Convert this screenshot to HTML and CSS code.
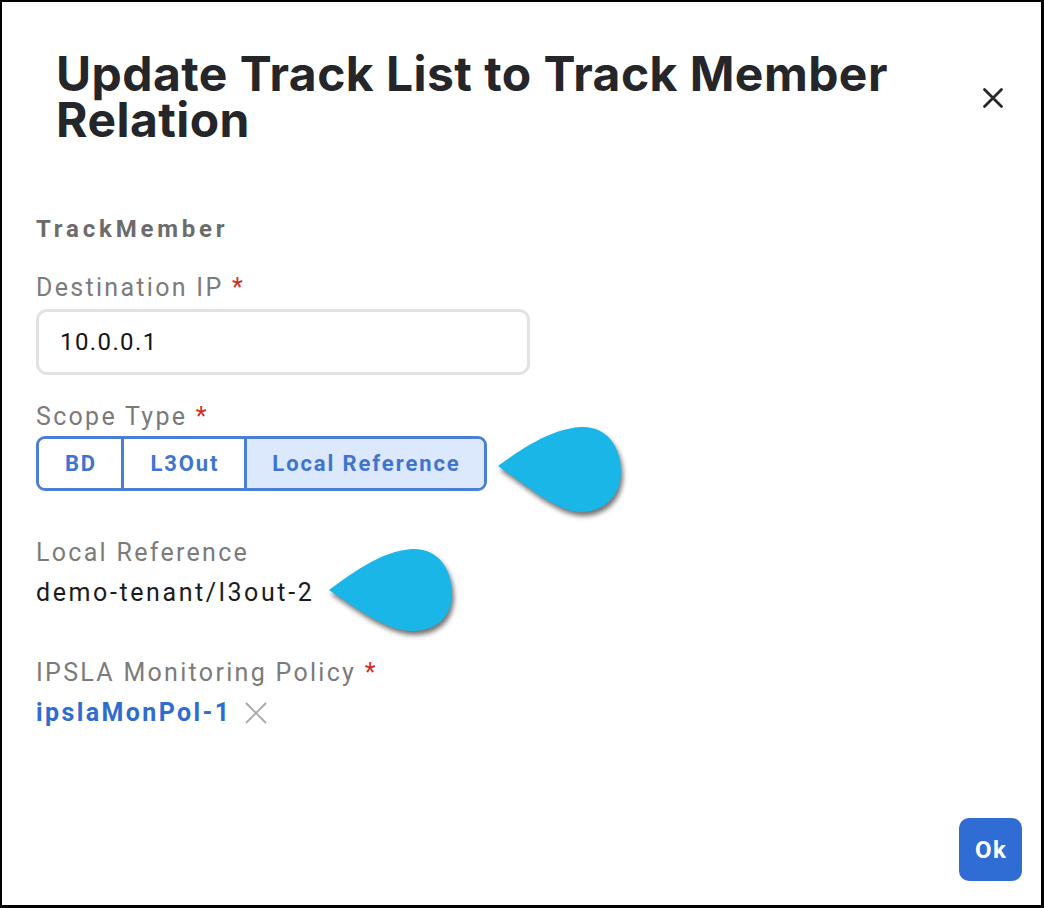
FILE: index.html
```html
<!DOCTYPE html>
<html lang="en">
<head>
<meta charset="utf-8">
<title>Update Track List to Track Member Relation</title>
<link rel="stylesheet" href="styles.css">
</head>
<body>
<div class="frame">
  <div class="dialog">
    <header class="dialog-header">
      <h1 class="dialog-title">Update Track List to Track Member Relation</h1>
      <button class="close-btn" aria-label="Close">
        <svg width="22" height="22" viewBox="0 0 22 22"><path d="M2.5 2.5 L19.5 19.5 M19.5 2.5 L2.5 19.5" stroke="#26272b" stroke-width="2.8" stroke-linecap="round" fill="none"/></svg>
      </button>
    </header>

    <section class="form">
      <h2 class="section-title">TrackMember</h2>

      <label class="field-label label-dest">Destination IP <span class="req">*</span></label>
      <div class="text-input">10.0.0.1</div>

      <label class="field-label label-scope">Scope Type <span class="req">*</span></label>
      <div class="segment-row">
        <div class="segmented">
          <span class="seg seg-bd">BD</span>
          <span class="seg seg-l3">L3Out</span>
          <span class="seg seg-local active">Local Reference</span>
        </div>
        <svg class="drop drop-scope" width="128" height="90" viewBox="0 0 128 90"><path d="M1 41 C22 26 52 4 84 2 C110 1 124 22 124 46 C124 72 106 87 84 87 C60 87 32 62 1 41 Z" fill="#19b6e7"/></svg>
      </div>

      <label class="field-label label-local">Local Reference</label>
      <div class="value-row"><span class="value-text">demo-tenant/l3out-2<svg class="drop drop-local" width="128" height="90" viewBox="0 0 128 90"><path d="M1 43 C22 28 52 4 84 2 C110 1 124 22 124 46 C124 72 106 84 84 84 C60 84 32 64 1 43 Z" fill="#19b6e7"/></svg></span></div>

      <label class="field-label label-ipsla">IPSLA Monitoring Policy <span class="req">*</span></label>
      <div class="chip-row">
        <span class="chip-link">ipslaMonPol-1</span>
        <svg class="chip-remove" width="24" height="24" viewBox="0 0 24 24"><path d="M2 2 L22 22 M22 2 L2 22" stroke="#a9a9a9" stroke-width="1.8" fill="none"/></svg>
      </div>
    </section>

    <footer class="dialog-footer">
      <button class="ok-btn">Ok</button>
    </footer>
  </div>
</div>
</body>
</html>
```

FILE: styles.css
```css
* {
  box-sizing: border-box;
}

html, body {
  margin: 0;
  padding: 0;
  background: #ffffff;
}

.frame {
  width: 1044px;
  height: 908px;
  border-style: solid;
  border-color: #000000;
  border-width: 2px 3px 3px 2px;
  background: #ffffff;
}

.dialog {
  height: 100%;
  display: flex;
  flex-direction: column;
  font-family: Roboto, "Liberation Sans", Arial, sans-serif;
}

/* header */
.dialog-header {
  display: flex;
  align-items: center;
  justify-content: space-between;
  padding: 49px 37px 0 54px;
}

.dialog-title {
  margin: 0;
  font-family: Inter, "Noto Sans", sans-serif;
  font-weight: 700;
  font-size: 48px;
  line-height: 46px;
  letter-spacing: 0.45px;
  color: #25262a;
  width: 860px;
}

.close-btn {
  border: none;
  background: transparent;
  padding: 0;
  width: 22px;
  height: 22px;
  margin-top: 2px;
  cursor: pointer;
}

.close-btn svg {
  display: block;
}

/* form */
.form {
  display: flex;
  flex-direction: column;
  align-items: flex-start;
  padding: 0 0 0 34px;
}

.section-title {
  margin: 71px 0 0 0;
  font-size: 24px;
  line-height: 30px;
  font-weight: 700;
  letter-spacing: 3.8px;
  color: #6c6c6c;
}

.field-label {
  display: block;
  font-size: 25px;
  line-height: 30px;
  font-weight: 400;
  letter-spacing: 2.3px;
  color: #7b7b7b;
}

.req {
  color: #d42a1f;
}

.label-dest {
  margin-top: 29px;
}

.text-input {
  margin-top: 6px;
  width: 494px;
  height: 66px;
  border: 3px solid #e2e2e2;
  border-radius: 11px;
  padding: 0 0 0 21px;
  display: flex;
  align-items: center;
  font-size: 24px;
  letter-spacing: 1.4px;
  color: #141414;
}

.label-scope {
  margin-top: 27px;
}

.segment-row {
  position: relative;
  margin-top: 4px;
}

.segmented {
  display: flex;
  height: 55px;
  border: 3px solid #4b7fd5;
  border-radius: 9px;
  overflow: hidden;
}

.seg {
  display: flex;
  align-items: center;
  justify-content: center;
  font-size: 22px;
  font-weight: 700;
  letter-spacing: 1.9px;
  padding-left: 1.9px;
  color: #3f75cf;
  background: #ffffff;
}

.seg + .seg {
  border-left: 3px solid #4b7fd5;
}

.seg-bd {
  width: 82px;
}

.seg-l3 {
  width: 123px;
}

.seg-local {
  width: 240px;
}

.seg.active {
  background: #dce8fb;
}

/* callout markers */
.drop {
  position: absolute;
  filter: drop-shadow(2px 4px 2.5px rgba(0, 0, 0, 0.55));
}

.drop-scope {
  left: calc(100% + 10px);
  top: -11px;
}

.label-local {
  margin-top: 47px;
}

.value-row {
  margin-top: 10px;
  font-size: 25px;
  line-height: 30px;
  letter-spacing: 2.6px;
  color: #1c1c1c;
}

.value-text {
  position: relative;
  display: inline-block;
}

.drop-local {
  left: calc(100% + 14px);
  top: -31px;
}

.label-ipsla {
  margin-top: 50px;
}

.chip-row {
  margin-top: 10px;
  display: flex;
  align-items: center;
  gap: 12px;
}

.chip-link {
  font-size: 25px;
  line-height: 30px;
  font-weight: 700;
  letter-spacing: 2.4px;
  color: #2f6ccf;
}

.chip-remove {
  display: block;
}

/* footer */
.dialog-footer {
  margin-top: auto;
  display: flex;
  justify-content: flex-end;
  padding: 0 19px 24px 0;
}

.ok-btn {
  width: 63px;
  height: 63px;
  border: none;
  border-radius: 10px;
  background: #2f6dd5;
  color: #ffffff;
  font-family: Roboto, "Liberation Sans", sans-serif;
  font-size: 24px;
  font-weight: 700;
  letter-spacing: 1.5px;
  padding: 0 0 0 1.5px;
  cursor: pointer;
}
```
